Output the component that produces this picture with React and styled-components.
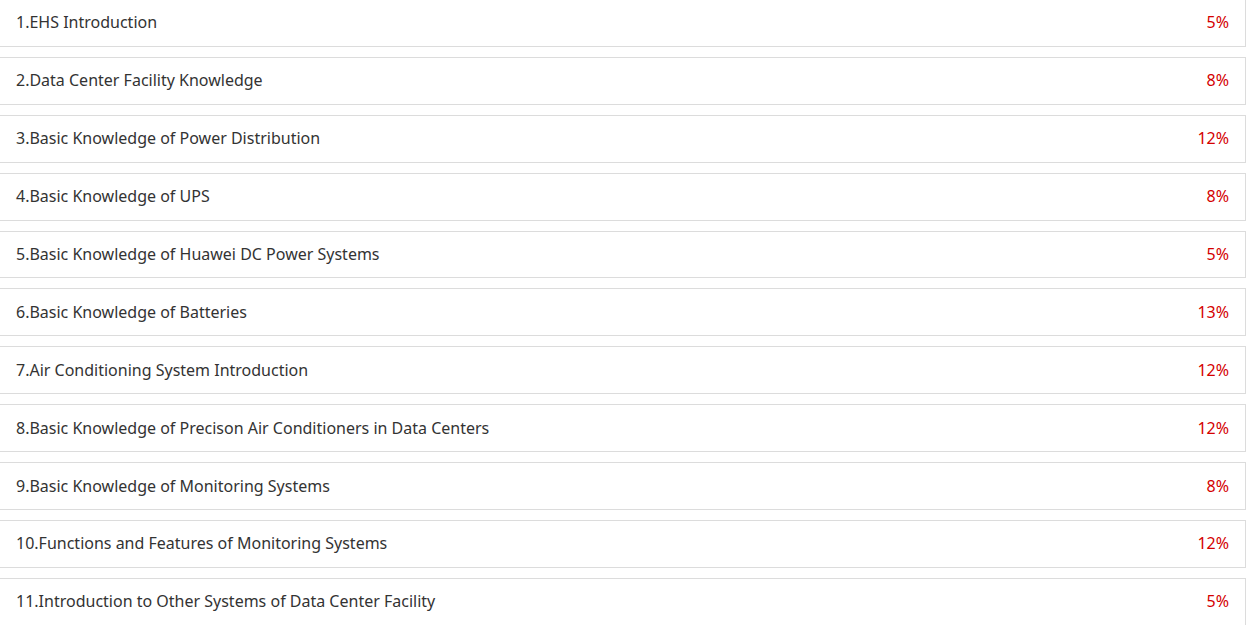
import React from 'react';
import styled, { createGlobalStyle } from 'styled-components';

const GlobalStyle = createGlobalStyle`
  html, body {
    margin: 0;
    padding: 0;
    background: #fff;
    overflow: hidden;
  }
  * {
    box-sizing: border-box;
  }
`;

const List = styled.div`
  display: flex;
  flex-direction: column;
  gap: 10px;
  width: 1247px;
  margin: -1px 0 0 -1px;
  font-family: "Noto Sans", "Open Sans", sans-serif;
  font-size: 16px;
`;

const Row = styled.div`
  display: flex;
  align-items: center;
  justify-content: space-between;
  height: 47.9px;
  padding: 0 16px 1px 16px;
  border: 1px solid #dcdcdc;
  background: #fff;
`;

const Title = styled.span`
  color: #333;
`;

const Weight = styled.span`
  color: #d40000;
`;

const chapters = [
  ['1.EHS Introduction', '5%'],
  ['2.Data Center Facility Knowledge', '8%'],
  ['3.Basic Knowledge of Power Distribution', '12%'],
  ['4.Basic Knowledge of UPS', '8%'],
  ['5.Basic Knowledge of Huawei DC Power Systems', '5%'],
  ['6.Basic Knowledge of Batteries', '13%'],
  ['7.Air Conditioning System Introduction', '12%'],
  ['8.Basic Knowledge of Precison Air Conditioners in Data Centers', '12%'],
  ['9.Basic Knowledge of Monitoring Systems', '8%'],
  ['10.Functions and Features of Monitoring Systems', '12%'],
  ['11.Introduction to Other Systems of Data Center Facility', '5%'],
];

const App = () => (
  <>
    <GlobalStyle />
    <List>
      {chapters.map(([title, weight]) => (
        <Row key={title}>
          <Title>{title}</Title>
          <Weight>{weight}</Weight>
        </Row>
      ))}
    </List>
  </>
);

export default App;
